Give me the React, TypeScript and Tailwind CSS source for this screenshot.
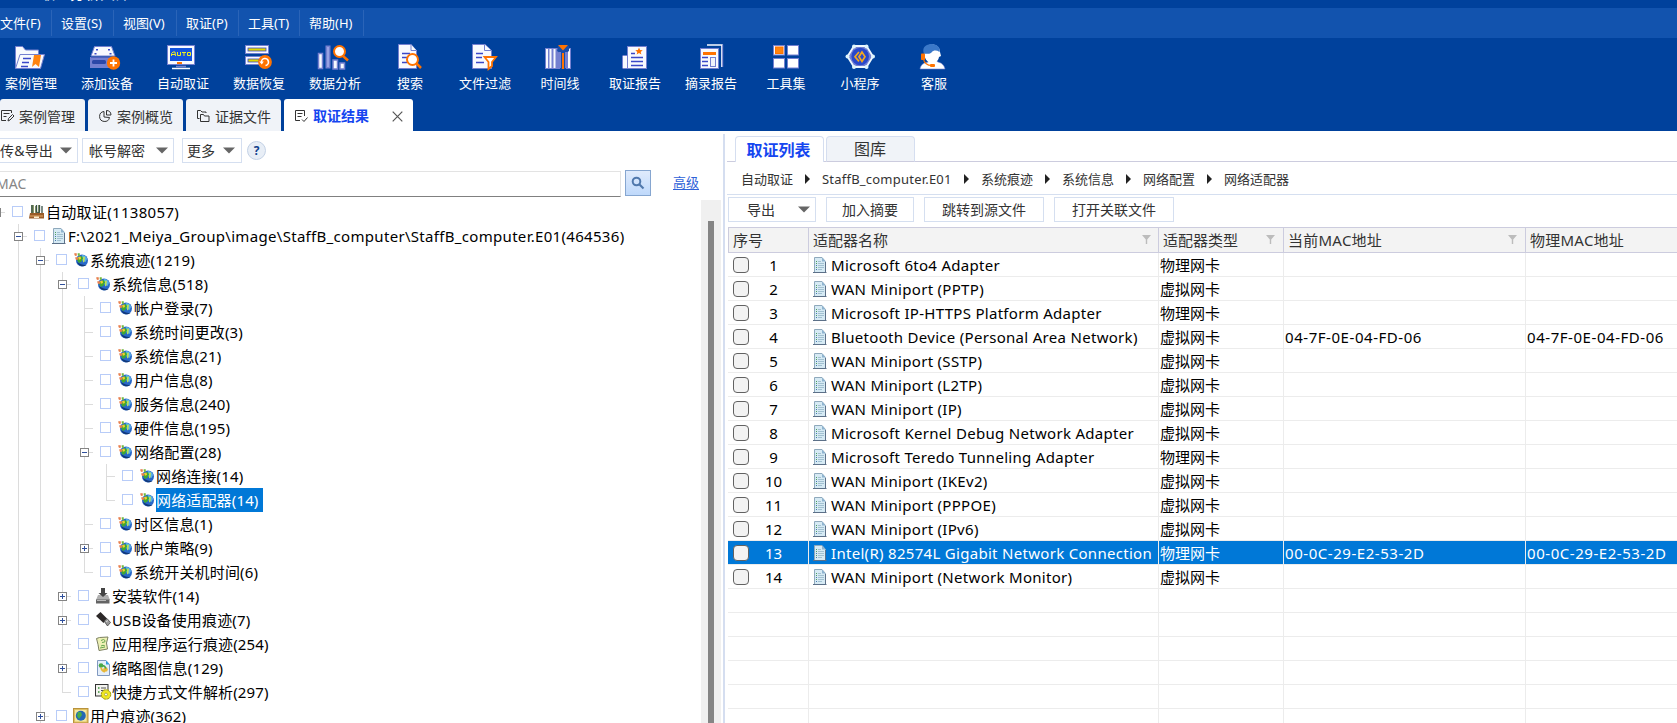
import React from "react";

const W = "#f8fafe";
const P = "#7480d0";
const B = "#3a48c8";
const O = "#ff7300";

const toolIcons: Record<string, React.ReactNode> = {
  case: (
    <>
      <path d="M2.500 25V3.500h7l3 3.500h13v4" fill={W} stroke={P} />
      <path d="M7 11.500h24.500l-4 14H2.500z" fill={W} stroke={P} />
      <path d="M10 15.500h8M9 19.500h7M8 23.500h7" stroke={B} strokeWidth="1.500" />
      <path d="M21 12h7l-2 12-3.500-3-3.500 3z" fill="#ff8410" />
    </>
  ),
  device: (
    <>
      <path d="M5.500 3.500h17l3.500 9.500h-24z" fill={W} stroke={P} />
      <path d="M7 6h2v1.500H7zM19 6h2v1.500h-2zM5.500 10h2v1.500h-2zM20.500 10h2v1.500h-2z" fill={B} />
      <rect x="1" y="14" width="25" height="11" fill={P} />
      <rect x="3" y="17" width="14" height="4" rx="1.500" fill="#2c48a8" />
      <path d="M2 14.500h22" stroke="#4f60bc" />
      <circle cx="24.500" cy="20" r="6.700" fill={O} />
      <path d="M24.500 16.500v7M21 20h7" stroke="#fff" strokeWidth="1.800" />
    </>
  ),
  auto: (
    <>
      <rect x="2.500" y="2.500" width="27" height="19" fill={W} stroke={P} />
      <rect x="5" y="5" width="22" height="13" fill="#1454dc" />
      <path
        d="M6.500 13V10.500L8 9h2l.5 4M7 11.500h3M12.500 9v3.500h3V9M17 9.500h4M19 9.500V13M22.500 9.500h3v3h-3z"
        fill="none"
        stroke="#f0ee20"
        strokeWidth="1"
      />
      <rect x="12" y="19" width="5" height="2" fill={O} />
      <path d="M11 23.500h10" stroke={P} strokeWidth="1.500" />
      <path d="M7 25.500h18" stroke={W} strokeWidth="1.500" />
    </>
  ),
  restore: (
    <>
      <rect x="4.500" y="2.500" width="23" height="8" fill={W} stroke={P} />
      <rect x="7" y="5" width="18" height="3" fill="#e0d800" stroke={B} strokeWidth=".8" />
      <rect x="4.500" y="13.500" width="23" height="8" fill={W} stroke={P} />
      <rect x="7" y="16" width="11" height="3" fill="#e0d800" stroke={B} strokeWidth=".8" />
      <circle cx="24" cy="19" r="6.900" fill={O} />
      <path d="M20.500 19.500a3.500 3.500 0 1 1 4 3" fill="none" stroke="#fff" strokeWidth="1.600" />
      <path d="M18.300 18.500l4.500 0-2 3z" fill="#fff" />
    </>
  ),
  analyze: (
    <>
      <rect x="1.500" y="10.500" width="4" height="15" fill={W} stroke={P} strokeWidth="1.500" />
      <rect x="8.500" y="2.500" width="5" height="23" fill={P} />
      <rect x="10" y="4" width="2" height="20" fill="#98a2e2" />
      <rect x="16" y="17" width="4.500" height="9" fill={W} stroke={P} strokeWidth="1.500" />
      <rect x="23" y="20" width="4.500" height="6" fill={W} stroke={P} strokeWidth="1.500" />
      <path d="M26 13l5 4.500" stroke={O} strokeWidth="2.500" />
      <circle cx="22.500" cy="8.500" r="5.500" fill="#fff" stroke={O} strokeWidth="2" />
    </>
  ),
  search: (
    <>
      <path d="M6.500 1.500H19l5.500 6v18h-18z" fill={W} stroke={P} />
      <path d="M19 1.500v6h5.500" fill={W} stroke={P} />
      <path d="M10 10.500h8M10 14.500h5M10 19.500h5" stroke={B} strokeWidth="1.600" />
      <path d="M24.500 20.500l4.500 4.500" stroke={O} strokeWidth="2.500" />
      <circle cx="20.500" cy="16.500" r="5.500" fill="#fff" stroke={O} strokeWidth="2" />
    </>
  ),
  filter: (
    <>
      <path d="M5.500 1.500H18l6.500 6v18h-19z" fill={W} stroke={P} />
      <path d="M17.500 1.500v6h6.500" fill={W} stroke={P} />
      <path d="M9 10.500h7M9 14.500h6M9 19.500h8" stroke={B} strokeWidth="1.600" />
      <path d="M17.500 14h11.500l-4 5v4l-3.500 3v-7z" fill="#fff" stroke={O} strokeWidth="1.800" />
    </>
  ),
  timeline: (
    <>
      <rect x="3" y="5" width="26" height="21" fill={P} />
      <path d="M5 6v19M8.500 6v19M12.500 6v19M27 6v19" stroke={W} strokeWidth="2" />
      <path d="M16 3h11v5l-3 2v16h-6V10l-3-2z" fill="#174daa" />
      <path d="M17 9h2v16h-2zM23 9h2v16h-2z" fill={P} />
      <path d="M16 2h10l-5 5.500z" fill={O} />
      <rect x="20" y="10" width="2" height="16" fill={O} />
    </>
  ),
  report: (
    <>
      <rect x="5.500" y="12.500" width="6" height="13" rx="1" fill={W} stroke={P} />
      <rect x="10.500" y="3.500" width="19" height="22" fill={W} stroke={P} />
      <path d="M22 4.500l1.100 2.500 2.600.2-2 1.700.7 2.600-2.400-1.500-2.300 1.500.6-2.600-2-1.700 2.600-.2z" fill={O} />
      <path d="M14 10.500h4M14 14.500h12M14 18.500h12M14 22.500h12" stroke={B} strokeWidth="1.600" />
    </>
  ),
  excerpt: (
    <>
      <path d="M14 2h15v22" fill="none" stroke={W} strokeWidth="1.700" />
      <path d="M29.700 1.500V24" stroke={P} />
      <rect x="7.500" y="5.500" width="18" height="20" fill={W} stroke={P} />
      <rect x="10" y="9" width="13" height="3" fill={O} />
      <path d="M9 14.500h6M9 18.500h6M9 22.500h6" stroke={B} strokeWidth="1.700" />
      <rect x="17.500" y="14.500" width="5" height="9" fill="#f1f4fb" stroke={P} />
    </>
  ),
  tools: (
    <>
      <rect x="5.500" y="2.500" width="11" height="9.500" fill={W} stroke={P} />
      <rect x="7.500" y="4" width="7.500" height="6.500" fill="#ff8410" stroke={O} />
      <rect x="19.500" y="2.500" width="11" height="9.500" fill="#fff" stroke={P} />
      <rect x="5.500" y="15.500" width="11" height="9.500" fill="#fff" stroke={P} />
      <rect x="19.500" y="15.500" width="11" height="9.500" fill="#fff" stroke={P} />
    </>
  ),
  mini: (
    <>
      <path d="M12 3h12.500l6.500 10.500-6.500 10.500H12L5.500 13.500z" fill="#7480d0" stroke="#eef8ff" strokeWidth="1.800" />
      <circle cx="18.200" cy="13.500" r="8.800" fill="#2848cc" />
      <g fill="#dff4fc">
        <circle cx="12" cy="3.500" r="2" />
        <circle cx="24.500" cy="3.500" r="2" />
        <circle cx="31" cy="13.500" r="2" />
        <circle cx="24.500" cy="24" r="2" />
        <circle cx="12" cy="24" r="2" />
        <circle cx="5.500" cy="13.500" r="2" />
      </g>
      <path d="M17 9l-4 4.700 4 4.700M20 9l-3 4.700 3 4.700 3-4.700z" fill="none" stroke="#f4a820" strokeWidth="1.700" />
    </>
  ),
  service: (
    <>
      <path d="M4 26c1-5 4-6 8-7l4-2h3l3 2c4 1 6 3 7 7z" fill="#fff" stroke={P} strokeWidth=".6" />
      <path d="M8 9c0-10 16-10 16 0l1 4-2 1c-1 5-4 6-7 6-5 0-8-5-8-11z" fill="#fff" />
      <path d="M8 11C5 3 12 1 16 1c5 0 9 4 7.500 8-3-2-6-2-8 .5-2 2-5 1-7.500 1.500z" fill="#3b78c8" />
      <rect x="5" y="10.500" width="4" height="6.500" rx=".8" fill={O} />
      <path d="M7.500 16c.5 4 4 6.500 8 6.500" fill="none" stroke={O} strokeWidth="1.200" />
      <rect x="14" y="21" width="5" height="3" rx="1" fill={O} />
    </>
  ),
};

const tools: [string, string, string][] = [
  ["case", "案例管理", "w-[76px]"],
  ["device", "添加设备", "w-[76px]"],
  ["auto", "自动取证", "w-[76px]"],
  ["restore", "数据恢复", "w-[76px]"],
  ["analyze", "数据分析", "w-[76px]"],
  ["search", "搜索", "w-[74px]"],
  ["filter", "文件过滤", "w-[76px]"],
  ["timeline", "时间线", "w-[74px]"],
  ["report", "取证报告", "w-[76px]"],
  ["excerpt", "摘录报告", "w-[76px]"],
  ["tools", "工具集", "w-[74px]"],
  ["mini", "小程序", "w-[74px]"],
  ["service", "客服", "w-[74px]"],
];

const menus: [string, string][] = [
  ["文件(F)", "w-[52px] pl-0"],
  ["设置(S)", "w-[62px] pl-[9px]"],
  ["视图(V)", "w-[63px] pl-[9px]"],
  ["取证(P)", "w-[62px] pl-[9px]"],
  ["工具(T)", "w-[61px] pl-[9px]"],
  ["帮助(H)", "w-[64px] pl-[9px]"],
];

function TabIcon({ kind }: { kind: string }) {
  return (
    <svg width="14" height="14" viewBox="0 0 14 14" fill="none" stroke="#333" className="mt-[2px] shrink-0">
      {kind === "edit" && <path d="M11.500 4V1.500h-10v10H6M3.500 4.500h6M3.500 7.500h3M8 12l.5-2.500 4-4 1.500 1.500-4 4z" />}
      {kind === "pie" && <path d="M6 2.500a5 5 0 1 0 5.500 6M6 2.500V8l5.500.5M8.500 1.500V6h4.500c0-3-2-4.500-4.500-4.500z" />}
      {kind === "files" && <path d="M3.500 9.500h-2v-8h3l1.500 1.500h4V4M4.500 5.500h3l1 1.500h4.500v5.500H4.500z" />}
      {kind === "check" && <path d="M10.500 7V1.500h-9v10H6M3.500 4.500h5M3.500 7.500h4M8 10.500l2 2 3.500-4" />}
    </svg>
  );
}

function MainTab({ kind, label, className }: { kind: string; label: string; className: string }) {
  return (
    <div className={`mr-[3px] flex h-8 items-center rounded-t-[3px] bg-[#f0f3f8] text-[14px] text-[#333] ${className}`}>
      <TabIcon kind={kind} />
      <span className="ml-[5px] pt-[3px] whitespace-nowrap">{label}</span>
    </div>
  );
}

function Caret() {
  return (
    <svg width="12" height="7" viewBox="0 0 12 7" className="-ml-px shrink-0">
      <path d="M0 .5h12L6 6.500z" fill="#666" />
    </svg>
  );
}

function TreeIcon({ kind }: { kind: string }) {
  return (
    <svg
      width="16"
      height="16"
      viewBox="1 0 16 16"
      className="shrink-0 overflow-visible"
    >
      {kind === "archive" && (
        <>
          <path d="M2 1h3v10H2zM6 2h2v9H6zM9 1h2v10H9z" fill="#8a9a6a" />
          <path d="M3 1v9M7.500 1v6q0 2 1.500 2t1.500-2V1M13 2v9" stroke="#385048" fill="none" strokeWidth="1.300" />
          <path d="M1 9h14v5.500H0z" fill="#9a5c28" />
          <path d="M1 12h13" stroke="#e0a868" />
          <path d="M5 12.500h5v1.500H5z" fill="#fff0d0" />
        </>
      )}
      {kind === "globe" && (
        <>
          <circle cx="9" cy="8.500" r="6" fill="#2868c8" />
          <path d="M4 10a6 6 0 0 0 9.500 3c-3 0-6-.5-9.500-3z" fill="#123878" />
          <path d="M9 3c3 0 5 2 5 4l-1.500 3-3-1.500L8 6z" fill="#58b0e8" />
          <path d="M6 5l3-1 1 2.500-1.500 3L6 11 4 8z" fill="#40a830" />
          <path d="M10 5l2-.5-.5 5-1.500 1z" fill="#b8e060" />
          <path d="M1 1.500l2.500-.5L4 3.500 2 4zM2 5.500L4.500 5l1 2.500-2.500.5z" fill="#e88050" />
          <path d="M4.500 1.500L6.500 1l.5 2.500-2 .5z" fill="#70b840" />
          <path d="M5 5l2.500-.5L8 7l-2 .7z" fill="#f4cf28" />
        </>
      )}
      {kind === "doc" && (
        <>
          <path d="M2.500.5H10L13.500 4.500v11h-11z" fill="#d6eaf4" stroke="#8fa9bc" />
          <path d="M10 .5v4h3.500" fill="#8fb4d0" />
          <path d="M1 15.500h13.500M13.500 5v10" stroke="#5c7088" />
          <path d="M6 4.500H9M6 6.500H12M6 8.500H12M6 10.500H12M6 12.500H10" stroke="#94b6c8" strokeWidth=".8" />
          <path d="M4 4.500h1M4 6.500h1M4 10.500h1" stroke="#50a060" />
          <path d="M4 8.500h1M4 12.500h1" stroke="#4878b0" />
        </>
      )}
      {kind === "install" && (
        <>
          <path d="M3 7h10l2 5H1z" fill="#b0b0b0" />
          <path d="M1 11.500h13.500v4H1z" fill="#646464" />
          <path d="M2 12.500h9" stroke="#bbb" />
          <path d="M6 0h4v5h2.500L8 9 3.500 5H6z" fill="#444" />
        </>
      )}
      {kind === "usb" && (
        <>
          <path d="M1 4l4.500-4L12 6.500 8.500 11z" fill="#2c2828" />
          <path d="M9 9l3-2.500 3.500 4-3 3.500z" fill="#989898" stroke="#333" strokeWidth=".7" />
          <path d="M11 10l2-1.500" stroke="#ddd" />
        </>
      )}
      {kind === "note" && (
        <>
          <path d="M1.500 2.500l3-1L13 1l-1.500 6 1 6-8.500 1.500-1-6z" fill="#edf0b4" stroke="#7c8060" />
          <path d="M6 4.500q3-2 4 0t-3 2M6 10q2-1.500 4 0M5 12l5-1" stroke="#6aa850" fill="none" />
        </>
      )}
      {kind === "thumb" && (
        <>
          <path d="M2.500.5H11L14.500 4.500v11h-12z" fill="#e4eefa" stroke="#8099c0" />
          <path d="M11 .5v4h3.500z" fill="#30a0e0" />
          <circle cx="6" cy="5.500" r="2.300" fill="#48a848" />
          <path d="M6 7.500q1 4 4 4" stroke="#e8b838" strokeWidth="1.800" fill="none" />
          <circle cx="10.500" cy="9.500" r="2.300" fill="#e8b838" />
          <path d="M7 5.500q3 0 4 3" stroke="#48a848" strokeWidth="1.400" fill="none" />
        </>
      )}
      {kind === "shortcut" && (
        <>
          <rect x=".5" y=".5" width="12.500" height="11.500" fill="#f4f4f0" stroke="#333" />
          <path d="M3 4h1.500M3 8h1.500" stroke="#389038" strokeWidth="1.500" />
          <path d="M6 4h5M6 6.500h3" stroke="#555" />
          <circle cx="11" cy="10.500" r="4.300" fill="#f0e820" stroke="#f0e820" strokeWidth="2" strokeDasharray="2 1.400" />
          <circle cx="11" cy="10.500" r="4.700" fill="none" stroke="#78740c" strokeWidth=".6" />
          <circle cx="11" cy="10.500" r="1.400" fill="#fff" stroke="#8a8410" strokeWidth=".6" />
        </>
      )}
      {kind === "user" && (
        <>
          <rect x="0" y="0" width="15.500" height="15.500" fill="#b8923c" />
          <rect x="1.500" y="1.500" width="12.500" height="12.500" fill="#f4e8a0" stroke="#e0c060" />
          <circle cx="7.800" cy="7.800" r="5" fill="#2468b4" />
          <path d="M5 4l3 0 1 3-3 4-2-3z" fill="#48ac48" />
        </>
      )}
    </svg>
  );
}

/* Guide characters, one per indent cell: "|" line, "t" tee, "l" last, "-" open node, "+" collapsed node */
const tree: { g: string; icon: string; text: string; sel?: boolean }[] = [
  { g: "", icon: "archive", text: "自动取证(1138057)" },
  { g: "-", icon: "doc", text: "F:\\2021_Meiya_Group\\image\\StaffB_computer\\StaffB_computer.E01(464536)" },
  { g: "|-", icon: "globe", text: "系统痕迹(1219)" },
  { g: "||-", icon: "globe", text: "系统信息(518)" },
  { g: "|||t", icon: "globe", text: "帐户登录(7)" },
  { g: "|||t", icon: "globe", text: "系统时间更改(3)" },
  { g: "|||t", icon: "globe", text: "系统信息(21)" },
  { g: "|||t", icon: "globe", text: "用户信息(8)" },
  { g: "|||t", icon: "globe", text: "服务信息(240)" },
  { g: "|||t", icon: "globe", text: "硬件信息(195)" },
  { g: "|||-", icon: "globe", text: "网络配置(28)" },
  { g: "||||t", icon: "globe", text: "网络连接(14)" },
  { g: "||||l", icon: "globe", text: "网络适配器(14)", sel: true },
  { g: "|||t", icon: "globe", text: "时区信息(1)" },
  { g: "|||+", icon: "globe", text: "帐户策略(9)" },
  { g: "|||l", icon: "globe", text: "系统开关机时间(6)" },
  { g: "||+", icon: "install", text: "安装软件(14)" },
  { g: "||+", icon: "usb", text: "USB设备使用痕迹(7)" },
  { g: "||t", icon: "note", text: "应用程序运行痕迹(254)" },
  { g: "||+", icon: "thumb", text: "缩略图信息(129)" },
  { g: "||l", icon: "shortcut", text: "快捷方式文件解析(297)" },
  { g: "|+", icon: "user", text: "用户痕迹(362)" },
];

function Guide({ c }: { c: string }) {
  const box = c === "-" || c === "+";
  return (
    <svg width="22" height="24" viewBox="0 0 22 24" shapeRendering="crispEdges" className="shrink-0">
      <path d={c === "l" ? "M11.500 0v12" : "M11.500 0v24"} stroke="#dcdcdc" />
      {c !== "|" && <path d="M11 12.500h9" stroke="#dcdcdc" />}
      {box && <rect x="7.500" y="8.500" width="8" height="8" fill="#fff" stroke="#848484" />}
      {box && <path d="M9 12.500h5" stroke="#30509c" />}
      {c === "+" && <path d="M11.500 10v5" stroke="#30509c" />}
    </svg>
  );
}

const rows: [string, string, string][] = [
  ["Microsoft 6to4 Adapter", "物理网卡", ""],
  ["WAN Miniport (PPTP)", "虚拟网卡", ""],
  ["Microsoft IP-HTTPS Platform Adapter", "物理网卡", ""],
  ["Bluetooth Device (Personal Area Network)", "虚拟网卡", "04-7F-0E-04-FD-06"],
  ["WAN Miniport (SSTP)", "虚拟网卡", ""],
  ["WAN Miniport (L2TP)", "虚拟网卡", ""],
  ["WAN Miniport (IP)", "虚拟网卡", ""],
  ["Microsoft Kernel Debug Network Adapter", "虚拟网卡", ""],
  ["Microsoft Teredo Tunneling Adapter", "物理网卡", ""],
  ["WAN Miniport (IKEv2)", "虚拟网卡", ""],
  ["WAN Miniport (PPPOE)", "虚拟网卡", ""],
  ["WAN Miniport (IPv6)", "虚拟网卡", ""],
  ["Intel(R) 82574L Gigabit Network Connection", "物理网卡", "00-0C-29-E2-53-2D"],
  ["WAN Miniport (Network Monitor)", "虚拟网卡", ""],
];
const blanks = [0, 1, 2, 3, 4, 5];
const grid = "grid grid-cols-[81px_350px_125px_242px_1fr]";

function Funnel() {
  return (
    <svg width="9" height="9" viewBox="0 0 9 9" className="mb-[2px] shrink-0">
      <path d="M0 0h9L5.200 4.500V9H3.800V4.500z" fill="#bcbcbc" />
    </svg>
  );
}

function Head({ text, className, filter = true }: { text: string; className: string; filter?: boolean }) {
  return (
    <div className={`flex items-center justify-between border-r border-[#ccccde] ${className}`}>
      <span className="whitespace-nowrap">{text}</span>
      {filter && <Funnel />}
    </div>
  );
}

export default function App() {
  const crumbs: [string, string][] = [
    ["自动取证", "w-[81px]"],
    ["StaffB_computer.E01", "w-[159px] tracking-[0.22px]"],
    ["系统痕迹", "w-[81px]"],
    ["系统信息", "w-[81px]"],
    ["网络配置", "w-[81px]"],
    ["网络适配器", "w-[81px]"],
  ];
  return (
    <div className="flex h-[723px] w-[1677px] flex-col overflow-hidden bg-white font-['Noto_Sans','Noto_Sans_CJK_SC',sans-serif] text-[15px] leading-none text-black">
      <header className="flex h-[131px] shrink-0 flex-col bg-[#00419c] text-[13px] text-white">
        <div className="flex h-2 items-start overflow-hidden pl-10">
          <span className="-mt-[14px] text-[15px] whitespace-nowrap">取证分析大师</span>
        </div>
        <nav className="flex h-[30px] bg-[#1253ae]">
          {menus.map(([t, w]) => (
            <div key={t} className={`flex items-center ${w}`}>
              <span className="flex-1 whitespace-nowrap">{t}</span>
              <span className="h-[26px] w-px bg-[#2a64b8]" />
            </div>
          ))}
        </nav>
        <div className="-ml-[7px] flex h-[61px] pt-[5px]">
          {tools.map(([k, t, w]) => (
            <div key={k} className={`flex flex-col items-center ${w}`}>
              <svg width="36" height="28" viewBox="0 0 36 28">
                {toolIcons[k]}
              </svg>
              <span className="mt-[6px] whitespace-nowrap">{t}</span>
            </div>
          ))}
        </div>
        <div className="flex h-8">
          <MainTab kind="edit" label="案例管理" className="w-[85px]" />
          <MainTab kind="pie" label="案例概览" className="w-[95px] pl-[10px]" />
          <MainTab kind="files" label="证据文件" className="w-[95px] pl-[10px]" />
          <div className="flex w-[129px] items-center rounded-t-[3px] bg-white pr-[10px] pl-[10px] text-[14px] font-bold text-[#1546f0]">
            <TabIcon kind="check" />
            <span className="ml-[5px] flex-1 pt-[2px] whitespace-nowrap">取证结果</span>
            <svg width="11" height="11" viewBox="0 0 11 11" className="mt-[3px]">
              <path d="M.7.700l9.600 9.600M10.300.700L.7 10.300" stroke="#555" strokeWidth="1.200" />
            </svg>
          </div>
        </div>
      </header>

      <main className="flex min-h-0 flex-1">
        <section className="flex w-[723px] shrink-0 flex-col">
          <div className="flex h-10 items-start pt-[7px] text-[14px] text-[#333]">
            <div className="flex h-[25px] w-[78px] items-center border border-l-0 border-[#d5dff0]">
              <span className="w-[61px] tracking-[0.2px] whitespace-nowrap">传&amp;导出</span>
              <Caret />
            </div>
            <div className="ml-1 flex h-[25px] w-[92px] items-center border border-[#d5dff0] pl-[6px]">
              <span className="w-[68px]">帐号解密</span>
              <Caret />
            </div>
            <div className="ml-2 flex h-[25px] w-[60px] items-center border border-[#d5dff0] pl-1">
              <span className="w-[37px]">更多</span>
              <Caret />
            </div>
            <div className="mt-[3px] ml-[5px] flex size-[19px] items-center justify-center rounded-full border border-[#c4d2e6] bg-[#e8eef6] font-['Open_Sans'] text-[12px] font-bold text-[#10408c]">
              ?
            </div>
          </div>
          <div className="flex h-[29px] items-start">
            <div className="flex h-[26px] w-[621px] items-center border border-b-1 border-l-0 border-[#e3e3e3] border-b-[#808080] text-[14px] text-[#868686]">
              <span className="-ml-[4px] tracking-[0.1px]">MAC</span>
            </div>
            <div className="-mt-px ml-1 flex size-[26px] items-center justify-center border border-[#86a6d0] bg-gradient-to-b from-[#e0ebfc] to-[#bfd9fb]">
              <svg width="14" height="14" viewBox="0 0 14 14" fill="none" stroke="#5078ac">
                <circle cx="5.500" cy="5.500" r="3.800" strokeWidth="2" />
                <path d="M8.500 8.500l4 4" strokeWidth="2.200" />
              </svg>
            </div>
            <span className="mt-[5px] ml-[22px] text-[13px] text-[#2f62d8] underline underline-offset-2">高级</span>
          </div>
          <div className="flex min-h-0 flex-1 overflow-hidden">
            <div className="w-[701px] shrink-0">
              {tree.map((n, i) => (
                <div key={i} className="flex h-6 items-center">
                  <span className="flex w-[7px] shrink-0 items-center">
                    {i === 0 && (
                      <>
                        <span className="mt-px h-[9px] w-px bg-[#848484]" />
                        <span className="mt-px h-px w-1 bg-[#dcdcdc]" />
                      </>
                    )}
                  </span>
                  {n.g.split("").map((c, j) => (
                    <Guide key={j} c={c} />
                  ))}
                  <span className="mr-[7px] mb-px ml-[5px] size-[11px] shrink-0 border border-[#b8ccf8]" />
                  <TreeIcon kind={n.icon} />
                  <span
                    className={`flex h-6 items-center whitespace-nowrap ${i < 2 ? "tracking-[0.31px]" : "tracking-[0.15px]"} ${
                      n.sel ? "bg-[#0078d7] pr-1 text-white" : ""
                    }`}
                  >
                    {n.text}
                  </span>
                </div>
              ))}
            </div>
            <div className="flex w-5 justify-center bg-[#f0f0f0] pt-[21px]">
              <div className="-ml-px w-[6px] bg-[#858585]" />
            </div>
          </div>
        </section>
        <div className="mt-[3px] w-[2px] shrink-0 bg-[#d5def0]" />

        <section className="flex min-w-0 flex-1 flex-col pt-[5px] pl-[2px]">
          <div className="flex h-[26px] items-stretch text-[16px]">
            <div className="w-2 border-b border-[#ccccde]" />
            <div className="flex w-[89px] items-center justify-center rounded-t-[4px] border border-b-0 border-[#d5def0] pr-[2px] font-bold text-[#1546f0]">
              取证列表
            </div>
            <div className="w-[2px] border-b border-[#ccccde]" />
            <div className="flex w-[89px] items-center justify-center rounded-t-[4px] border border-[#d5def0] border-b-[#ccccde] bg-[#f0f3f8] pr-px text-[#333]">
              图库
            </div>
            <div className="flex-1 border-b border-[#ccccde]" />
          </div>
          <div className="flex h-[33px] items-center border-b border-[#d5dff0] pt-[2px] pl-[14px] text-[13px] text-[#333]">
            {crumbs.map(([t, w], i) => (
              <div key={t} className={`flex items-center justify-between ${w}`}>
                <span className="whitespace-nowrap">{t}</span>
                {i < 5 && (
                  <svg width="5" height="10" viewBox="0 0 5 10" className="mr-[12px]">
                    <path d="M0 0l5 5-5 5z" fill="#222" />
                  </svg>
                )}
              </div>
            ))}
          </div>
          <div className="flex h-[32px] items-start gap-[10px] pt-[2px] pl-px text-[14px] text-[#333]">
            <div className="flex h-[25px] w-[88px] items-center border border-[#d5dff0] pl-[18px]">
              <span className="w-[52px]">导出</span>
              <Caret />
            </div>
            <div className="flex h-[25px] w-[88px] items-center justify-center border border-[#d5dff0]">加入摘要</div>
            <div className="flex h-[25px] w-[120px] items-center justify-center border border-[#d5dff0]">跳转到源文件</div>
            <div className="flex h-[25px] w-[120px] items-center justify-center border border-[#d5dff0]">打开关联文件</div>
          </div>
          <div className="ml-px grid h-[26px] shrink-0 grid-cols-[80px_350px_125px_242px_1fr] border-y border-l border-[#ccccde] bg-[#f3f3f3] text-[#333]">
            <Head text="序号" className="pl-1" filter={false} />
            <Head text="适配器名称" className="pr-[7px] pl-[4px]" />
            <Head text="适配器类型" className="pr-[8px] pl-[4px]" />
            <Head text="当前MAC地址" className="pr-[8px] pl-[4px] tracking-[0.25px]" />
            <Head text="物理MAC地址" className="border-r-0 pl-[4px] tracking-[0.25px]" filter={false} />
          </div>
          <div className="ml-px min-h-0 flex-1 overflow-hidden">
            {rows.map(([name, type, mac], i) => (
              <div
                key={i}
                className={`h-6 border-b border-[#ececec] ${grid} ${i === 12 ? "bg-[#0078d7] text-white" : ""}`}
              >
                <div className="flex items-center border-r border-[#ececec] pl-[5px]">
                  <span className="size-4 shrink-0 rounded-[4px] border border-[#626262] bg-[#f3f3f3]" />
                  <span className="ml-[8px] w-[33px] pt-px text-center">{i + 1}</span>
                </div>
                <div className="flex items-center border-r border-[#ececec] pl-[4px]">
                  <TreeIcon kind="doc" />
                  <span className="ml-[2px] pt-px tracking-[0.3px] whitespace-nowrap">{name}</span>
                </div>
                <div className="flex items-center border-r border-[#ececec] pt-px pl-px">{type}</div>
                <div className="flex items-center border-r border-[#ececec] pt-px pl-px tracking-[0.55px]">{mac}</div>
                <div className="flex items-center pt-px pl-px tracking-[0.55px] whitespace-nowrap">{mac}</div>
              </div>
            ))}
            {blanks.map((b) => (
              <div key={b} className={`h-6 border-b border-[#ececec] ${grid}`}>
                <div className="border-r border-[#ececec]" />
                <div className="border-r border-[#ececec]" />
                <div className="border-r border-[#ececec]" />
                <div className="border-r border-[#ececec]" />
                <div />
              </div>
            ))}
          </div>
        </section>
      </main>
    </div>
  );
}
